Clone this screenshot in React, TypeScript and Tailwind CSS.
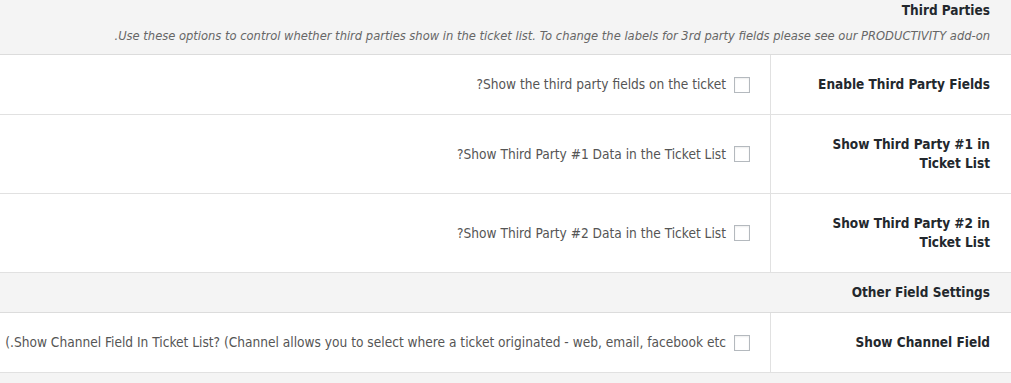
const FONT = "font-['DejaVu_Sans_Condensed','DejaVu_Sans',Tahoma,sans-serif]";

function Checkbox() {
  return <span className="inline-block w-4 h-4 shrink-0 border border-[#b4b9be] bg-white shadow-[inset_0_1px_2px_rgba(0,0,0,0.07)]" />;
}

function Row({ label, children }: { label: string; children: React.ReactNode }) {
  return (
    <div className="flex border-b border-[#e1e1e1] bg-white">
      <div className="w-[241px] shrink-0 pr-[21px] pl-[20px] py-5 flex items-center border-l border-[#e1e1e1] text-[13.5px] font-bold leading-[19px] text-[#23282d]">
        {label}
      </div>
      <div className="flex-1 flex items-center gap-2 pr-5 py-5 text-[13.6px] leading-[19px] text-[#555]">
        <Checkbox />
        <span className="whitespace-nowrap">{children}</span>
      </div>
    </div>
  );
}

export default function App() {
  return (
    <div dir="rtl" className={`w-[1011px] h-[383px] overflow-hidden bg-[#f4f4f4] ${FONT}`}>
      <div className="pt-px pr-[21px] pb-[9px] border-b border-[#dcdcdc]">
        <h2 className="text-[13.5px] font-bold leading-[19px] text-[#23282d]">Third Parties</h2>
        <p className="mt-[6px] text-[12.8px] italic leading-[19px] text-[#666]">
          Use these options to control whether third parties show in the ticket list. To change the labels for 3rd party fields please see our PRODUCTIVITY add-on.
        </p>
      </div>
      <Row label="Enable Third Party Fields">Show the third party fields on the ticket?</Row>
      <Row label="Show Third Party #1 in Ticket List">Show Third Party #1 Data in the Ticket List?</Row>
      <Row label="Show Third Party #2 in Ticket List">Show Third Party #2 Data in the Ticket List?</Row>
      <div className="pr-[21px] py-[10px] border-b border-[#dcdcdc] text-[13.5px] font-bold leading-[19px] text-[#23282d]">
        Other Field Settings
      </div>
      <Row label="Show Channel Field">
        <bdi>Show Channel Field In Ticket List? (Channel allows you to select where a ticket originated - web, email, facebook etc</bdi>.)
      </Row>
    </div>
  );
}
